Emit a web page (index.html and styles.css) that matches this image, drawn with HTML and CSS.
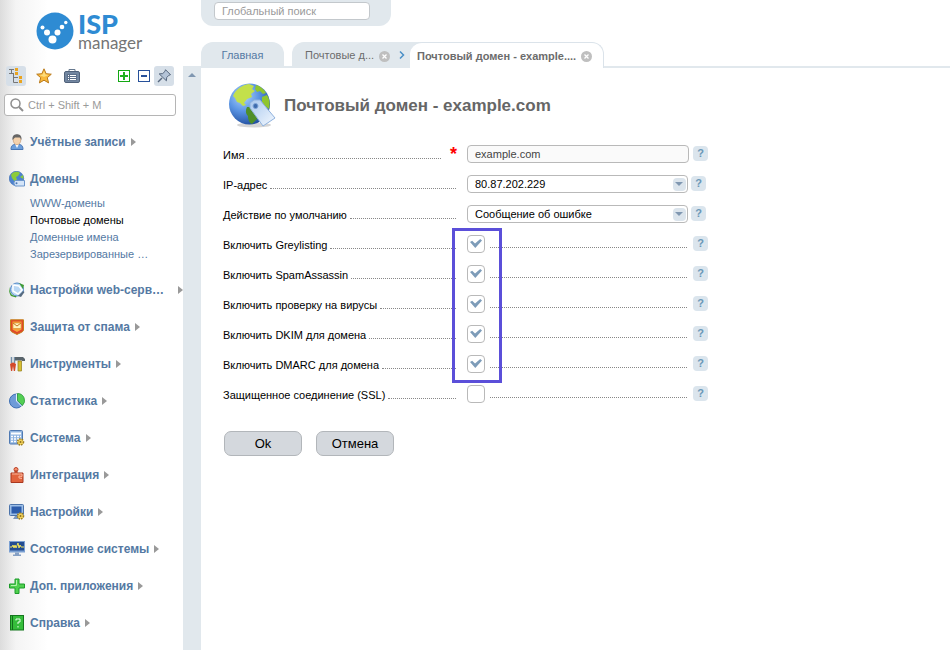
FILE: index.html
```html
<!DOCTYPE html>
<html lang="ru">
  <head>
    <meta charset="UTF-8" />
    <meta name="viewport" content="width=device-width, initial-scale=1.0" />
    <title>ISPmanager - Почтовый домен</title>
    <link rel="stylesheet" href="styles.css">
  </head>
  <body>
    <aside class="sidebar">
      <a href="#" class="logo">
        <svg width="38" height="38" viewBox="0 0 38 38">
          <circle cx="19" cy="19" r="18.5" fill="#2e8bd3" />
          <g fill="#fff">
            <circle cx="6.500" cy="15.500" r="2" />
            <circle cx="11" cy="20.500" r="3" />
            <circle cx="16.500" cy="27.500" r="4" />
            <circle cx="21.500" cy="20.500" r="3" />
            <circle cx="26" cy="15" r="2.300" />
            <circle cx="29.800" cy="10.500" r="1.700" />
          </g>
        </svg>
        <span class="logo-text">
          <b>ISP</b>
          <span>manager</span>
        </span>
      </a>

      <div class="toolbar">
        <button type="button" class="tool tool-on" aria-label="Дерево меню">
          <svg width="16" height="16" viewBox="0 0 16 16">
            <path d="M1 1.500h5M1 5.500h5M3.500 1.500v4M5.500 5.500v9M5.500 9.500H10M5.500 14.500H10" fill="none" stroke="#777" />
            <path d="M7 0h3v3H7zM7 4h3v3H7zM11 8h3v3h-3zM11 12h3v3h-3z" fill="#eaa41f" />
          </svg>
        </button>
        <button type="button" class="tool" aria-label="Избранное">
          <svg width="16" height="16" viewBox="0 0 16 16">
            <path d="M8 .8l2.100 4.900 5.200.5-4 3.500 1.300 5.200L8 12.200l-4.600 2.700 1.300-5.200-4-3.500 5.200-.5z" fill="#f9b93c" stroke="#b97a1c" />
            <path d="M8 3l1.300 3.600 3.200.3L8 9 3.500 6.900l3.200-.3z" fill="#fddc7c" />
          </svg>
        </button>
        <button type="button" class="tool" aria-label="Список">
          <svg width="16" height="16" viewBox="0 0 16 16">
            <path d="M5 3.500V1.500h6v2" fill="none" stroke="#67798f" />
            <rect x=".5" y="3.500" width="15" height="11" rx="1.500" fill="#7286a0" stroke="#50617a" />
            <path d="M3 6h10v6.500H3z" fill="#5c6f8a" />
            <path d="M4 7.500h1M6 7.500h6M4 9.500h1M6 9.500h6M4 11.500h1M6 11.500h6" stroke="#fff" />
          </svg>
        </button>
        <button type="button" class="tool tool-right" aria-label="Развернуть все">
          <svg width="12" height="12" viewBox="0 0 12 12">
            <rect x=".5" y=".5" width="11" height="11" fill="#fff" stroke="#13a813" />
            <path d="M6 2v8M2 6h8" stroke="#1fb11f" stroke-width="2" />
          </svg>
        </button>
        <button type="button" class="tool" aria-label="Свернуть все">
          <svg width="12" height="12" viewBox="0 0 12 12">
            <rect x=".5" y=".5" width="11" height="11" fill="#fff" stroke="#27519a" />
            <path d="M3 6h6" stroke="#27519a" stroke-width="2" />
          </svg>
        </button>
        <button type="button" class="tool tool-on" aria-label="Закрепить меню">
          <svg width="14" height="14" viewBox="0 0 14 14">
            <path d="M1 13l4-4" stroke="#56677e" stroke-width="1.500" />
            <path d="M8.500 .7l5 5-1.500.5-2.300 2.300-.3 3.300L2.200 4.900l3.500-.3L8 2.300z" fill="#b4c4d8" stroke="#56677e" stroke-linejoin="round" />
          </svg>
        </button>
      </div>

      <div class="menu-search">
        <svg width="14" height="14" viewBox="0 0 14 14">
          <circle cx="5.500" cy="5.500" r="4.500" fill="none" stroke="#8e8e8e" stroke-width="1.500" />
          <path d="M9 9l4 4" stroke="#8e8e8e" stroke-width="2" />
        </svg>
        <input type="text" placeholder="Ctrl + Shift + M" aria-label="Поиск по меню" />
      </div>

      <ul class="menu">
        <li>
          <a href="#">
            <svg width="16" height="16" viewBox="0 0 16 16">
              <path d="M2 15.500c0-4 2-5 4-5h4c2 0 4 1 4 5z" fill="#6d9fdb" stroke="#4876b4" />
              <path d="M6 10l2 4 2-4z" fill="#fff" />
              <ellipse cx="8" cy="6" rx="3.800" ry="4.700" fill="#f5d2ac" stroke="#b98a62" stroke-width=".6" />
              <path d="M3.500 6C3 1 6 .3 8 .3S13 1 12.500 6L11 3.500H6z" fill="#666" />
            </svg>
            <span>Учётные записи</span>
          </a>
        </li>
        <li>
          <a href="#" class="open">
            <svg width="16" height="16" viewBox="0 0 16 16">
              <circle cx="7.500" cy="7.500" r="7.200" fill="#4e83d0" stroke="#3466ae" stroke-width=".6" />
              <path d="M2 4c2-4 7-4 9-2L9 5 7 6l1 3-2 2-3-4zM11 6l3-2 .5 4z" fill="#8ccc3a" />
              <path d="M6 9.500h9.500v5.500H6L4.800 12z" fill="#d5e5f8" stroke="#6c96cc" />
              <circle cx="7.500" cy="12.200" r="1" fill="#4876b4" />
            </svg>
            <span>Домены</span>
          </a>
          <ul class="submenu">
            <li><a href="#">WWW-домены</a></li>
            <li><a href="#" class="current">Почтовые домены</a></li>
            <li><a href="#">Доменные имена</a></li>
            <li><a href="#">Зарезервированные …</a></li>
          </ul>
        </li>
        <li>
          <a href="#">
            <svg width="16" height="16" viewBox="0 0 16 16">
              <circle cx="8" cy="7.500" r="6.500" fill="#b9d7f4" stroke="#4f86c6" />
              <path d="M4 3l6 1 3 4-4 4-5-3z" fill="none" stroke="#fff" stroke-width="1.500" />
              <path d="M.5 5c0 7 3 9 7 9l-.5 1.500L2 14C0 11-.2 8 .5 5zM10 1l5 2-1 4z" fill="#3f9b35" />
              <path d="M9 14l5-5 1.500 1-3.500 5z" fill="#566b80" />
            </svg>
            <span class="long">Настройки web-серв…</span>
          </a>
        </li>
        <li>
          <a href="#">
            <svg width="16" height="16" viewBox="0 0 16 16">
              <path d="M1.500 .8h13V11c0 2-4 3-6.500 4.500C5.500 14 1.500 13 1.500 11z" fill="#e1472a" stroke="#c38119" />
              <path d="M3.500 2.500h9v8L8 13l-4.500-2.500z" fill="#f6a43a" />
              <rect x="4" y="4" width="8" height="5.500" fill="#fff3bd" stroke="#d78b2c" stroke-width=".6" />
              <path d="M4 4l4 3 4-3" fill="none" stroke="#c67322" />
            </svg>
            <span>Защита от спама</span>
          </a>
        </li>
        <li>
          <a href="#">
            <svg width="16" height="16" viewBox="0 0 16 16">
              <path d="M2.500 1v6M5.500 1v6" stroke="#7490a9" stroke-width="1.500" />
              <path d="M1 8c2-2 4-2 6 0L6 15H4.800L4 10l-.8 5H2z" fill="#d34a2b" />
              <path d="M6 1h8l2 2v2h-3V4.500H6z" fill="#59646b" />
              <path d="M9 5h3.500v10H9z" fill="#d7bf31" stroke="#927c18" stroke-width=".7" />
            </svg>
            <span>Инструменты</span>
          </a>
        </li>
        <li>
          <a href="#">
            <svg width="16" height="16" viewBox="0 0 16 16">
              <circle cx="7.500" cy="8" r="7" fill="#6e9bd8" stroke="#3c6eb3" />
              <path d="M8.500 7.500V.5A7 7 0 0 1 13.500 12.500z" fill="#54cf54" stroke="#259336" stroke-width=".7" />
              <path d="M7.500 1v7l5 5" fill="none" stroke="#e4f0fb" />
            </svg>
            <span>Статистика</span>
          </a>
        </li>
        <li>
          <a href="#">
            <svg width="16" height="16" viewBox="0 0 16 16">
              <rect x=".5" y=".5" width="13" height="13.500" rx="1" fill="#91b5e0" stroke="#4f79b2" />
              <path d="M2 3.500h10" stroke="#fff" stroke-width="2" />
              <path d="M2 6.500h10M2 9h10M2 11.500h7" stroke="#fff" stroke-dasharray="2 1" stroke-width="1.500" />
              <circle cx="11.500" cy="12" r="3" fill="#f5d55d" stroke="#9b7c22" stroke-dasharray="1.500 1" stroke-width="1.500" />
              <circle cx="11.500" cy="12" r="1" fill="#8d7022" />
            </svg>
            <span>Система</span>
          </a>
        </li>
        <li>
          <a href="#">
            <svg width="16" height="16" viewBox="0 0 16 16">
              <circle cx="7" cy="2.500" r="2" fill="#f3906d" stroke="#bb4027" />
              <path d="M6 4h2v2h6v9.500H2V6h4z" fill="#e1633d" stroke="#a93820" />
              <path d="M3 7h10v2.500L10 9v2l3 .5" fill="none" stroke="#fbb69b" />
            </svg>
            <span>Интеграция</span>
          </a>
        </li>
        <li>
          <a href="#">
            <svg width="16" height="16" viewBox="0 0 16 16">
              <rect x=".5" y=".5" width="14" height="11" rx="1" fill="#9dbfe7" stroke="#4b73aa" />
              <rect x="2.500" y="2.500" width="10" height="7" fill="#2c5cab" />
              <path d="M6 12h3l1 3H4z" fill="#7c98bd" />
              <circle cx="11.500" cy="12" r="3" fill="#f5d55d" stroke="#9b7c22" stroke-dasharray="1.500 1" stroke-width="1.500" />
              <circle cx="11.500" cy="12" r="1" fill="#8d7022" />
            </svg>
            <span>Настройки</span>
          </a>
        </li>
        <li>
          <a href="#">
            <svg width="16" height="16" viewBox="0 0 16 16">
              <rect x="0" y="0" width="16" height="11.500" fill="#7ba0d2" />
              <rect x="1" y="1" width="14" height="8.500" fill="#244d91" />
              <path d="M1 6h2l1-2 1 3 1-3 1 3 2-5 1 5 1-3 1 2h3" fill="none" stroke="#f0e35b" />
              <path d="M6 11.500h4v2h2V15H4v-1.500h2z" fill="#86a0c4" />
            </svg>
            <span>Состояние системы</span>
          </a>
        </li>
        <li>
          <a href="#">
            <svg width="16" height="16" viewBox="0 0 16 16">
              <path d="M6 1h4v5h5.500v4H10v5.500H6V10H.5V6H6z" fill="#4fd04e" stroke="#1d9a2a" />
              <path d="M7.500 2v5.500H2" fill="none" stroke="#b3f3ac" />
            </svg>
            <span>Доп. приложения</span>
          </a>
        </li>
        <li>
          <a href="#">
            <svg width="16" height="16" viewBox="0 0 16 16">
              <rect x="1.500" y=".5" width="13" height="14.500" fill="#35bd3b" stroke="#15771e" />
              <path d="M3.500 1v14" stroke="#126e1b" />
              <path d="M7 5.500V4h4v3H9v2M9 11v1.500" fill="none" stroke="#eaffea" />
            </svg>
            <span>Справка</span>
          </a>
        </li>
      </ul>
    </aside>

    <div class="splitter"></div>

    <main class="main">
      <div class="global-search">
        <input type="text" placeholder="Глобальный поиск" aria-label="Глобальный поиск" />
      </div>

      <nav class="tabs">
        <a href="#" class="tab tab-home">Главная</a>
        <div class="tab tab-parent">
          <a href="#">Почтовые д...</a>
          <button type="button" class="close" aria-label="Закрыть">
            <svg width="11" height="11" viewBox="0 0 11 11">
              <circle cx="5.500" cy="5.500" r="5.500" fill="#bfbfbf" />
              <path d="M3.500 3.500l4 4M7.500 3.500l-4 4" stroke="#fff" stroke-width="1.300" />
            </svg>
          </button>
          <svg class="chevron" width="6" height="8" viewBox="0 0 6 8">
            <path d="M1 .5L4.500 4 1 7.500" fill="none" stroke="#4a8fc6" stroke-width="1.500" />
          </svg>
        </div>
        <div class="tab tab-active">
          <a href="#">Почтовый домен - example....</a>
          <button type="button" class="close" aria-label="Закрыть">
            <svg width="11" height="11" viewBox="0 0 11 11">
              <circle cx="5.500" cy="5.500" r="5.500" fill="#bfbfbf" />
              <path d="M3.500 3.500l4 4M7.500 3.500l-4 4" stroke="#fff" stroke-width="1.300" />
            </svg>
          </button>
        </div>
      </nav>

      <div class="content">
        <header class="page-title">
          <svg width="48" height="48" viewBox="0 0 48 48">
            <defs>
              <radialGradient id="sea" cx=".35" cy=".3" r=".75">
                <stop offset="0" stop-color="#b4d6fb" />
                <stop offset=".5" stop-color="#5b95e4" />
                <stop offset="1" stop-color="#1f4c9c" />
              </radialGradient>
              <linearGradient id="tag" x1="0" y1="0" x2="1" y2="1">
                <stop offset="0" stop-color="#a9c8ee" />
                <stop offset="1" stop-color="#f4f9ff" />
              </linearGradient>
            </defs>
            <ellipse cx="26" cy="43" rx="17" ry="2.500" fill="#d5d5d5" />
            <circle cx="21.500" cy="22" r="20.500" fill="url(#sea)" />
            <path d="M5 14C8 7 14 3 21 2l5 2-2 3 3 2-4 3 1 3-5 2-3 4 2 2-3 1-3-3-3-1-2-4z" fill="#c3e04b" />
            <path d="M28 3c4 1 8 4 10 8l-3 1-3-3-3 1-2-3zM34 15l5-2c3 5 3 9 2 14l-4-3-3-4z" fill="#8fc52f" />
            <path d="M19 25l5 0 6 5 1 5-4 4-3 3c-3-1-4-5-4-8-2-2-3-5-1-9z" fill="#4f8f28" />
            <path d="M22 21l4-3h6l15 18-12 8-13-18z" fill="url(#tag)" stroke="#8fb2de" stroke-linejoin="round" />
            <circle cx="27.500" cy="24" r="2.500" fill="#3e6cae" stroke="#7fa5d6" />
          </svg>
          <h1>Почтовый домен - example.com</h1>
        </header>

        <form action="#">
          <div class="row">
            <label for="name"><span>Имя</span></label>
            <span class="required">*</span>
            <div class="control">
              <input type="text" id="name" value="example.com" readonly />
            </div>
            <button type="button" class="help">?</button>
          </div>
          <div class="row">
            <label for="ip"><span>IP-адрес</span></label>
            <div class="control select">
              <select id="ip"><option>80.87.202.229</option></select>
            </div>
            <button type="button" class="help">?</button>
          </div>
          <div class="row">
            <label for="action"><span>Действие по умолчанию</span></label>
            <div class="control select">
              <select id="action"><option>Сообщение об ошибке</option></select>
            </div>
            <button type="button" class="help">?</button>
          </div>

          <div class="highlight">
            <div class="row">
              <label for="greylisting"><span>Включить Greylisting</span></label>
              <div class="control check"><input type="checkbox" id="greylisting" checked /></div>
              <button type="button" class="help">?</button>
            </div>
            <div class="row">
              <label for="spam"><span>Включить SpamAssassin</span></label>
              <div class="control check"><input type="checkbox" id="spam" checked /></div>
              <button type="button" class="help">?</button>
            </div>
            <div class="row">
              <label for="virus"><span>Включить проверку на вирусы</span></label>
              <div class="control check"><input type="checkbox" id="virus" checked /></div>
              <button type="button" class="help">?</button>
            </div>
            <div class="row">
              <label for="dkim"><span>Включить DKIM для домена</span></label>
              <div class="control check"><input type="checkbox" id="dkim" checked /></div>
              <button type="button" class="help">?</button>
            </div>
            <div class="row">
              <label for="dmarc"><span>Включить DMARC для домена</span></label>
              <div class="control check"><input type="checkbox" id="dmarc" checked /></div>
              <button type="button" class="help">?</button>
            </div>
          </div>

          <div class="row">
            <label for="ssl"><span>Защищенное соединение (SSL)</span></label>
            <div class="control check"><input type="checkbox" id="ssl" /></div>
            <button type="button" class="help">?</button>
          </div>

          <div class="buttons">
            <button type="submit" class="btn">Ok</button>
            <button type="button" class="btn">Отмена</button>
          </div>
        </form>
      </div>
    </main>
  </body>
</html>
```
FILE: styles.css
```css
*,
*::before,
*::after {
  box-sizing: border-box;
}
body {
  margin: 0;
  display: flex;
  min-height: 100vh;
  background-color: #fff;
  font-family: "Liberation Sans", Arial, sans-serif;
  font-size: 11px;
  color: #000;
}
a {
  color: #5479a3;
  text-decoration: none;
}
ul {
  list-style: none;
  margin: 0;
  padding: 0;
}
button,
input,
select {
  font-family: inherit;
  font-size: 11px;
}
button {
  padding: 0;
  border: none;
  background: none;
  cursor: pointer;
}
svg {
  display: block;
  flex: none;
}

/* sidebar */
.sidebar {
  flex: none;
  width: 183px;
  background: linear-gradient(to right, #dcdcdc, #f4f4f4 16px, #fff 48px);
}
.logo {
  display: flex;
  height: 66px;
  padding: 12px 0 0 36px;
  gap: 4px;
}
.logo-text {
  font-family: Lato, sans-serif;
  font-size: 17px;
  line-height: 14px;
  color: #757575;
}
.logo-text b {
  display: block;
  font-size: 27px;
  font-weight: 900;
  line-height: 24px;
  color: #2e8bd3;
}
.logo-text span {
  display: block;
}
.toolbar {
  display: flex;
  align-items: center;
  padding-left: 6px;
  padding-right: 9px;
  gap: 8px;
}
.tool {
  display: flex;
  align-items: center;
  justify-content: center;
  width: 20px;
  height: 20px;
  border-radius: 3px;
}
.tool-on {
  background-color: #d6dfe8;
}
.tool-right {
  margin-left: auto;
}
.tool-right,
.tool-right + .tool {
  margin-right: -8px;
}
.menu-search {
  display: flex;
  align-items: center;
  gap: 4px;
  height: 22px;
  margin: 8px 7px 7px 4px;
  padding-left: 5px;
  border: 1px solid #b5b5b5;
  border-radius: 3px;
  background-color: #fff;
}
.menu-search input {
  width: 100%;
  padding: 0;
  border: none;
  outline: none;
  background: none;
}
::placeholder {
  color: #9a9a9a;
}
.menu > li {
  padding: 10px 0 10px 9px;
}
.menu > li > a {
  display: flex;
  align-items: center;
  height: 17px;
  gap: 5px;
  font-size: 12px;
  font-weight: bold;
  white-space: nowrap;
}
.menu .long {
  width: 143px;
}
.menu > li > a::after {
  content: "";
  border: 4px solid transparent;
  border-left: 5px solid #999;
  border-right: none;
}
.menu > li > .open::after {
  display: none;
}
.submenu {
  margin: 8px 0 -2px;
  padding-left: 21px;
}
.submenu a {
  display: block;
  line-height: 17px;
  white-space: nowrap;
}
.submenu .current {
  color: #000;
}
.splitter {
  flex: none;
  width: 18px;
  margin-top: 66px;
  padding: 7px 0 0 5px;
  background-color: #e1e8ed;
}
.splitter::before {
  content: "";
  display: block;
  width: 8px;
  border: 4px solid transparent;
  border-top: none;
  border-bottom-color: #8097b1;
}

/* top part */
.main {
  flex: 1;
  min-width: 0;
}
.global-search {
  width: 190px;
  height: 26px;
  padding: 2px 0 0 13px;
  border-radius: 0 0 12px 12px;
  background-color: #e1e8ed;
}
.global-search input {
  display: block;
  width: 156px;
  height: 18px;
  padding: 0 7px;
  border: 1px solid #c3c8cc;
  border-radius: 4px;
}
.tabs {
  display: flex;
  height: 26px;
  margin-top: 16px;
  box-shadow: inset 0 -2px #e1e8ed;
}
.tab {
  display: flex;
  align-items: center;
  border-radius: 12px 12px 0 0;
  background-color: #e1e8ed;
}
.tab-home {
  justify-content: center;
  width: 83px;
  margin-right: 8px;
}
.tab-parent {
  width: 130px;
  margin-right: -12px;
  padding-left: 13px;
  border-top-right-radius: 0;
}
.tab-parent a,
.tab-active a {
  color: #6c6c6c;
}
.tab-active {
  width: 194px;
  padding-left: 7px;
  border: 1px solid #dbe3ea;
  border-left: none;
  border-bottom: none;
  background-color: #fff;
  font-weight: bold;
}
.close {
  margin: 2px 0 0 5px;
}
.chevron {
  margin-left: 9px;
}

/* form */
.content {
  padding: 14px 22px;
}
.page-title {
  display: flex;
  align-items: center;
  gap: 8px;
  padding-left: 5px;
}
.page-title h1 {
  margin: 0;
  font-size: 17px;
  line-height: 46px;
  color: #666;
}
form {
  margin-top: 9px;
}
.row {
  display: flex;
  align-items: center;
  height: 30px;
}
label {
  display: flex;
  flex: none;
  width: 233px;
  margin-right: 11px;
  padding-top: 2px;
  line-height: 14px;
}
label::after,
.check::after {
  content: "";
  flex: 1;
  height: 11px;
  margin-left: 3px;
  border-bottom: 1px dotted #888;
}
label[for="name"] {
  width: 218px;
  margin-right: 9px;
}
.required {
  width: 17px;
  font-size: 18px;
  font-weight: bold;
  line-height: 14px;
  color: #f00;
}
.control {
  position: relative;
  display: flex;
  align-items: center;
  width: 222px;
}
.control input[type=text],
select {
  width: 100%;
  height: 18px;
  padding: 0 7px;
  border: 1px solid #b9b9b9;
  border-radius: 4px;
  background-color: #fff;
  color: #000;
}
.control input[type=text] {
  background-color: #fafafa;
  color: #444;
}
.select {
  width: 221px;
}
select {
  appearance: none;
}
.select::before {
  content: "";
  position: absolute;
  right: 2px;
  width: 13px;
  height: 13px;
  border-radius: 4px;
  background-color: #dbe4ec;
  pointer-events: none;
}
.select::after {
  content: "";
  position: absolute;
  right: 5px;
  border: 4px solid transparent;
  border-top-color: #8097b1;
  border-bottom: none;
  pointer-events: none;
}
input[type=checkbox] {
  appearance: none;
  width: 18px;
  height: 18px;
  margin: 0;
  padding: 3px 2px;
  border: 1px solid #b9b9b9;
  border-radius: 4px;
  background-color: #fff;
}
input[type=checkbox]:checked::before {
  content: "";
  display: block;
  width: 12px;
  height: 9px;
  background-color: #7d9cb9;
  clip-path: polygon(0 32%, 18% 20%, 42% 50%, 85% 0, 100% 18%, 44% 100%);
}
.check::after {
  height: 7px;
  margin-left: 5px;
  margin-right: 2px;
}
.help {
  width: 15px;
  height: 15px;
  margin: 0 0 1px 4px;
  border-radius: 4px;
  background-color: #dbe5ed;
  color: #6a98b8;
  font-weight: bold;
  line-height: 15px;
}
.select + .help {
  margin-left: 3px;
}
.highlight {
  position: relative;
}
/* frame over the tick boxes */
.highlight::after {
  content: "";
  position: absolute;
  top: -1px;
  bottom: -4px;
  left: 229px;
  width: 50px;
  border: 3px solid #5b4fd9;
  pointer-events: none;
}
.buttons {
  display: flex;
  gap: 14px;
  margin: 22px 1px;
}
.btn {
  min-width: 78px;
  height: 25px;
  border: 1px solid #b2b6ba;
  border-radius: 7px;
  background-color: #d4d8dd;
  font-size: 13px;
}
```
